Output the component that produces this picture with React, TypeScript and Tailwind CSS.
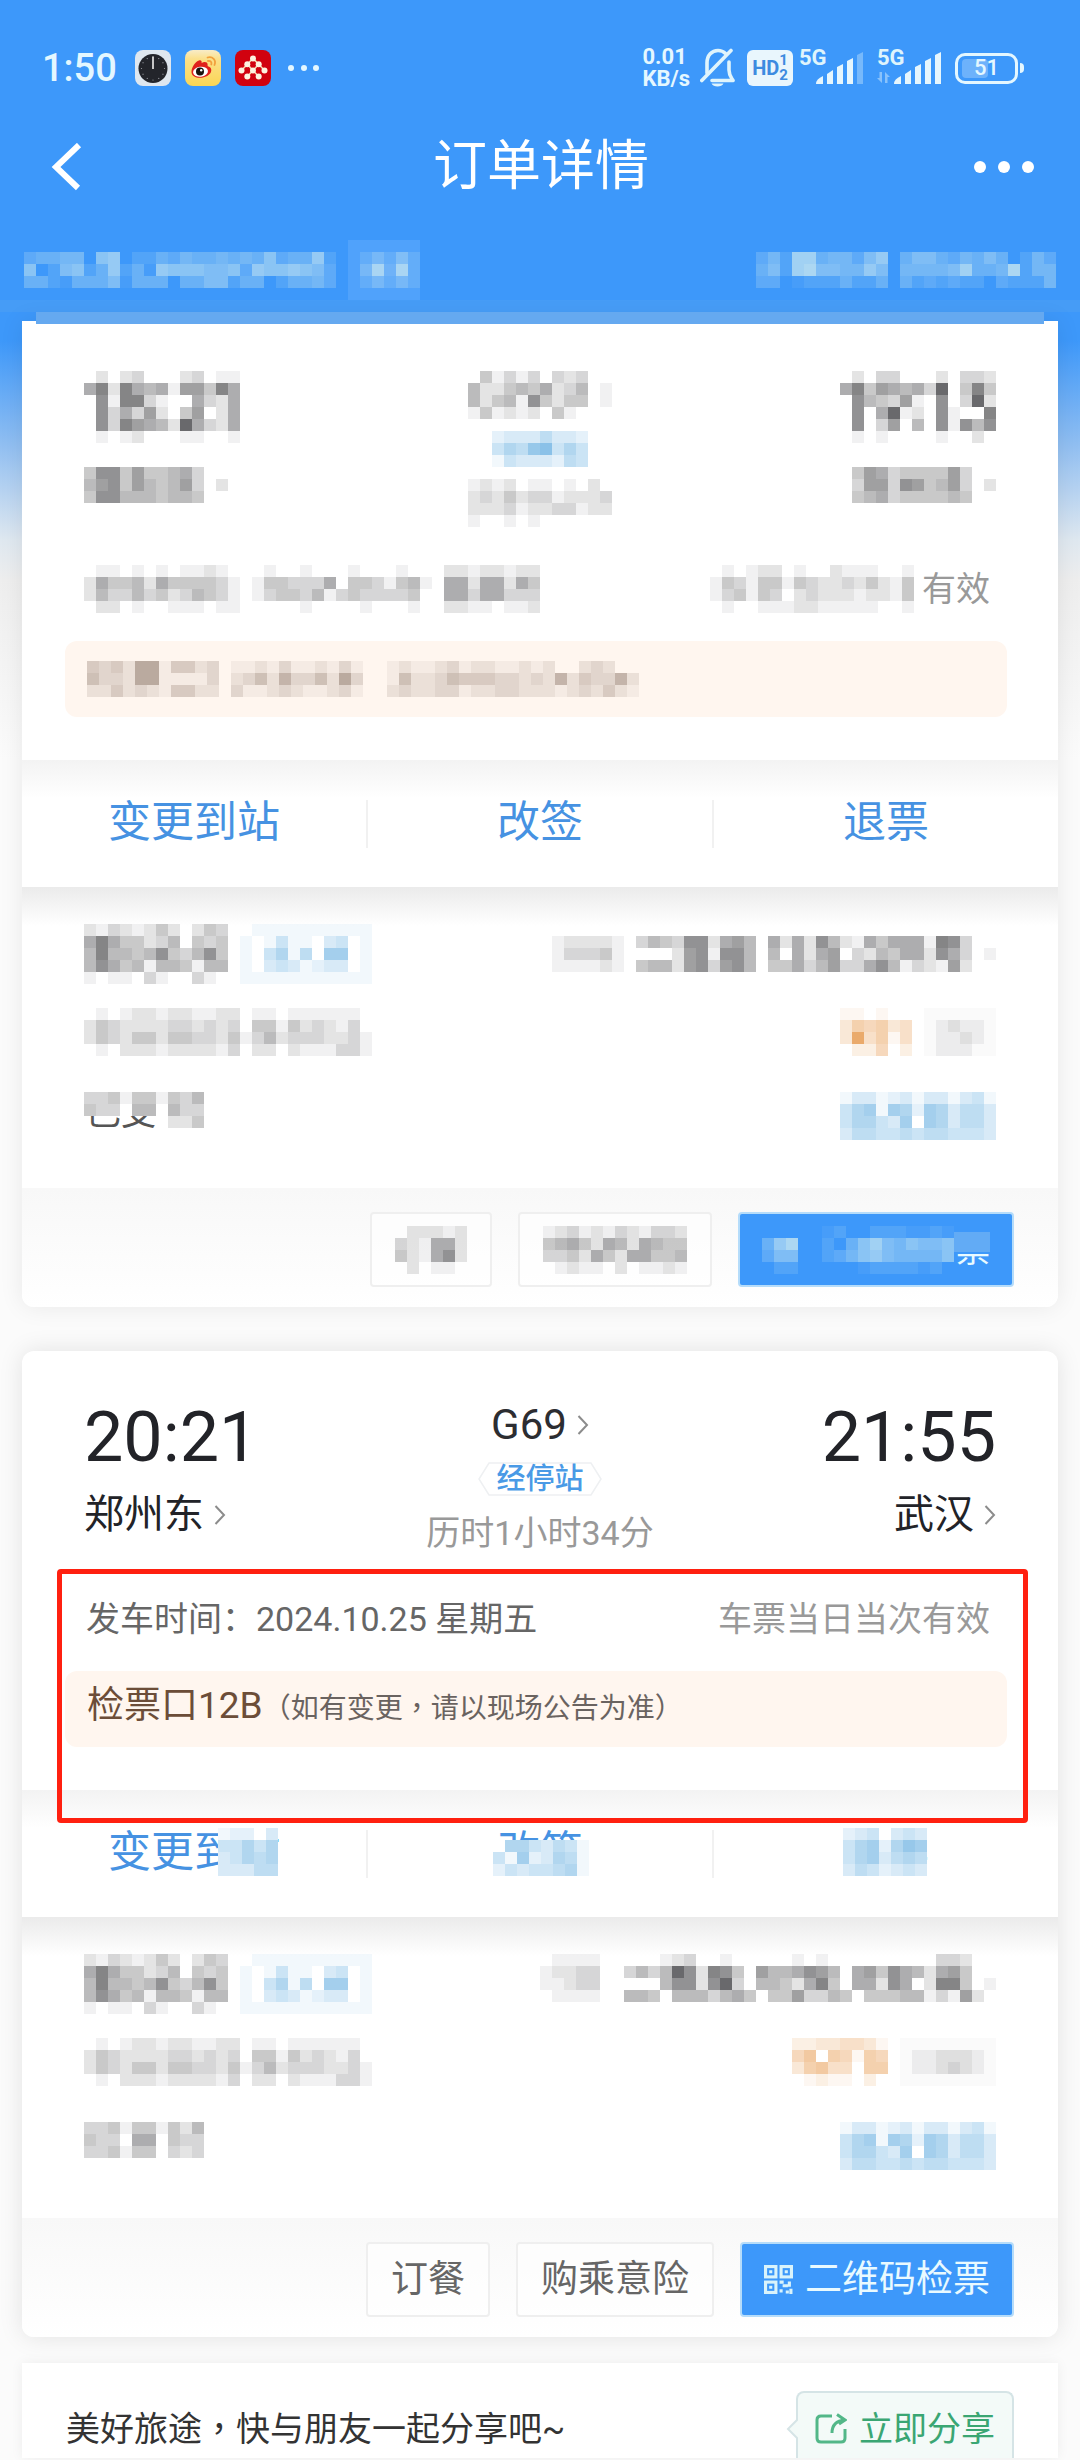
import type { ReactNode } from "react";
import clsx from "clsx";

const CELL = 12;

const TONES = {
	gray: "#333336",
	blue: "#3c98d8",
	orange: "#e38b35",
	brown: "#6b5344",
	white: "#e4f6ee",
};

// Every character is one cell, its hex value the strength of the tone.
function Mosaic({
	rows,
	tone = "gray",
	className,
}: {
	rows: string[];
	tone?: keyof typeof TONES;
	className?: string;
}) {
	const cols = Math.max(...rows.map((row) => row.length));

	return (
		<svg
			aria-hidden="true"
			width={cols * CELL}
			height={rows.length * CELL}
			shapeRendering="crispEdges"
			fill={TONES[tone]}
			className={clsx("shrink-0", className)}
		>
			{rows.map((row, y) =>
				[...row].map((cell, x) => {
					const level = parseInt(cell, 16);
					return level > 0 ? (
						<rect
							key={`${x}-${y}`}
							x={x * CELL}
							y={y * CELL}
							width={CELL}
							height={CELL}
							opacity={level / 15}
						/>
					) : null;
				}),
			)}
		</svg>
	);
}

// The TC face centres the full-width comma in its square.
function Comma() {
	return <span className="font-['Noto_Sans_CJK_TC',sans-serif]" lang="zh-TW">{"\uFF0C"}</span>;
}

function Chevron() {
	return (
		<svg width="12" height="22" viewBox="0 0 12 22" fill="none" className="shrink-0">
			<path d="M1.5 2 L10 11 L1.5 20" stroke="#8c8c8c" strokeWidth="2" />
		</svg>
	);
}

function ClockApp() {
	return (
		<svg width="36" height="36" viewBox="0 0 36 36">
			<rect width="36" height="36" rx="8" fill="#dfe7ef" />
			<circle cx="18" cy="18.500" r="14.500" fill="#23252b" />
			{[0, 30, 60, 90, 120, 150, 180, 210, 240, 270, 300, 330].map((deg) => (
				<circle
					key={deg}
					cx="18"
					cy="7"
					r="0.6"
					fill="#9a9da3"
					transform={`rotate(${deg} 18 18.5)`}
				/>
			))}
			<path d="M18 6.500 V19" stroke="#d8d8d8" strokeWidth="1.800" />
		</svg>
	);
}

function WeiboApp() {
	return (
		<svg width="36" height="36" viewBox="0 0 36 36">
			<defs>
				<linearGradient id="weibo" x1="0" y1="0" x2="0" y2="1">
					<stop offset="0" stopColor="#f8ecc8" />
					<stop offset="0.25" stopColor="#fbe08a" />
					<stop offset="1" stopColor="#fbd654" />
				</linearGradient>
			</defs>
			<rect width="36" height="36" rx="8" fill="url(#weibo)" />
			<path
				d="M6.500 22 C6.500 17 10.500 11.500 14 10.500 C16 10 17 11 16.600 13 C19 11.500 22.500 11.500 22.600 14.500 C22.700 15.500 22.300 16 23.500 16.600 C26.500 17.700 27 20.500 25.500 23 C21 29.500 6.500 29.500 6.500 22 Z"
				fill="#e0211c"
			/>
			<ellipse cx="15.500" cy="21.800" rx="7.500" ry="5" fill="#fff" transform="rotate(-8 15.500 21.800)" />
			<circle cx="15" cy="21.500" r="4" fill="#17120f" />
			<circle cx="16.200" cy="20.300" r="1.200" fill="#fff" />
			<path
				d="M22.500 7.500 C27.500 6 31.500 10 29.500 15 M23 11 C25.500 10.500 27 12 26.300 14.500"
				fill="none"
				stroke="#f2a03c"
				strokeWidth="1.800"
				strokeLinecap="round"
			/>
		</svg>
	);
}

function RedApp() {
	const dots = [
		[18, 8.5], [12.3, 14.2], [23.7, 14.2], [6.5, 20.5],
		[18, 20.5], [29.5, 20.5], [12.3, 26.5], [23.7, 26.5],
	];
	return (
		<svg width="36" height="36" viewBox="0 0 36 36">
			<rect width="36" height="36" rx="8" fill="#d1020f" />
			<path
				d="M12.300 14.200 L18 8.500 L23.700 14.200 M6.500 20.500 L12.300 14.200 L18 20.500 L23.700 14.200 L29.500 20.500 M12.300 26.500 L18 20.500 L23.700 26.500"
				fill="none"
				stroke="#f3d7ad"
				strokeWidth="1.600"
			/>
			{dots.map(([cx, cy]) => (
				<circle key={`${cx}-${cy}`} cx={cx} cy={cy} r="3" fill="#fdf3e0" />
			))}
		</svg>
	);
}

function MutedBell() {
	return (
		<svg width="35" height="40" viewBox="0 0 35 40" fill="none" stroke="#dff4fc" strokeWidth="3.600">
			<path d="M7 25 V15 C7 7 12 2.500 18 2.500 C21 2.500 23.500 3.500 25.500 5.500" strokeLinecap="round" />
			<path d="M29 14 V22 C29 27 31 29 33 32.500 H12" strokeLinejoin="round" strokeLinecap="round" />
			<path d="M31 2.500 L1.800 32.500" strokeLinecap="round" />
			<path d="M11.500 35.500 C13 39.500 22 39.500 23.500 35.500 Z" fill="#dff4fc" stroke="none" />
		</svg>
	);
}

function Signal({ weak = false, data = false }: { weak?: boolean; data?: boolean }) {
	return (
		<div className="relative h-9 w-16">
			<span className="absolute left-0 top-0 text-[22px] leading-4 font-bold text-[#dff4fc]">
				5G
			</span>
			<svg width="66" height="36" viewBox="0 0 66 36" fill="#e6f6fd" className="absolute left-0 top-0">
				{data && (
					<path
						d="M5 22 V33 L0 28 H2.500 V22 Z M8 33 V22 L13 27 H10.500 V33 Z"
						opacity="0.45"
					/>
				)}
				<path d="M17 34 Q17 29 24 26 V34 Z" />
				<path d="M28 34 V24 L34 20 V34 Z" />
				<path d="M38 34 V17 L44 14 V34 Z" />
				<path d="M48 34 V11 L54 8 V34 Z" />
				<path d="M58 34 V5 L64 2 V34 Z" opacity={weak ? 0.35 : 1} />
			</svg>
		</div>
	);
}

function StatusBar() {
	return (
		<div className="flex h-[136px] items-center justify-between pl-[42px] pr-14 text-[#e4f7ff]">
			<div className="flex items-center gap-3.5">
				<span className="mr-1 text-[38px] leading-10 font-medium">1:50</span>
				<ClockApp />
				<WeiboApp />
				<RedApp />
				<svg width="36" height="8" viewBox="0 0 36 8" fill="#e4f7ff">
					<circle cx="6" cy="4" r="3" />
					<circle cx="19" cy="4" r="3" />
					<circle cx="31" cy="4" r="3" />
				</svg>
			</div>
			<div className="flex items-center">
				<div className="mr-2.5 text-[22px] font-bold">
					<div className="leading-[22px]">0.01</div>
					<div className="leading-[22px]">KB/s</div>
				</div>
				<MutedBell />
				<div className="ml-3 flex h-9 w-[46px] items-center justify-center rounded-md bg-[#e9f6fd] font-bold text-[#3d8be0]">
					<span className="text-[20px] leading-5">HD</span>
					<span className="text-[15px] leading-[15px]">
						<span className="block">1</span>
						<span className="block">2</span>
					</span>
				</div>
				<div className="ml-1.5 flex gap-3.5">
					<Signal weak />
					<Signal data />
				</div>
				<div className="ml-3.5 flex items-center gap-0.5">
					<div className="relative flex h-[31px] w-[63px] items-center justify-center rounded-[10px] border-3 border-[#e4f7ff]">
						<span className="absolute left-1 top-[3px] h-[19px] w-[26px] rounded-sm bg-white/25" />
						<span className="relative text-[22px] leading-6 font-medium">51</span>
					</div>
					<span className="h-2.5 w-1 rounded-r-full bg-[#e4f7ff]" />
				</div>
			</div>
		</div>
	);
}

function NavBar() {
	return (
		<header className="flex h-[62px] items-center justify-between pl-12 pr-[46px] text-white">
			<button type="button" aria-label="返回" className="w-[60px]">
				<svg width="36" height="48" viewBox="0 0 36 48" fill="none">
					<path d="M31 2 L8 24 L30 45" stroke="#fff" strokeWidth="6" />
				</svg>
			</button>
			<h1 className="text-[54px] leading-[62px]">订单详情</h1>
			<button type="button" aria-label="更多">
				<svg width="60" height="14" viewBox="0 0 60 14" fill="#fff">
					<circle cx="6" cy="7" r="6" />
					<circle cx="30" cy="7" r="6" />
					<circle cx="54" cy="7" r="6" />
				</svg>
			</button>
		</header>
	);
}

function OrderInfo() {
	return (
		<div className="mt-[42px] flex h-[60px] items-center justify-between px-6">
			<div className="flex items-center">
				<Mosaic
					tone="white"
					rows={[
						"344550780224354454547344820",
						"702672482418777667387787630",
						"442144461444044662440244530",
					]}
				/>
				<Mosaic
					tone="white"
					className="bg-white/10"
					rows={["000000", "024252", "049392", "024242", "000000"]}
				/>
			</div>
			<Mosaic
				tone="white"
				rows={[
					"03529945536804664354640253",
					"04629a6655860555569445a255",
					"03301222422404232322032225",
				]}
			/>
		</div>
	);
}

function TripSection({
	depart,
	train,
	arrive,
	date,
	validity,
	gate,
}: {
	depart: ReactNode;
	train: ReactNode;
	arrive: ReactNode;
	date: ReactNode;
	validity: ReactNode;
	gate: ReactNode;
}) {
	return (
		<section className="pb-[43px]">
			<div className="grid grid-cols-3 px-[62px] pt-[50px]">
				<div className="flex flex-col items-start gap-[18px]">{depart}</div>
				<div className="flex flex-col items-center gap-3">{train}</div>
				<div className="flex flex-col items-end gap-[18px]">{arrive}</div>
			</div>
			<div className="mt-[38px] flex h-12 items-center justify-between pl-16 pr-[68px] text-[34px] leading-[48px] whitespace-nowrap">
				<div className="text-[#666]">{date}</div>
				<div className="flex items-center text-[#999]">{validity}</div>
			</div>
			<div className="mr-[51px] ml-[43px] mt-7 flex h-[76px] items-center rounded-xl bg-[#fff6ef] px-[22px]">
				{gate}
			</div>
		</section>
	);
}

function ActionRow({ children }: { children: ReactNode }) {
	return (
		<section className="flex h-[127px] items-center divide-x-2 divide-[#f1f1f1] bg-linear-to-b from-[#f3f3f3] via-white via-30% to-white">
			{children}
		</section>
	);
}

function Action({ label, cover }: { label: string; cover?: ReactNode }) {
	return (
		<button
			type="button"
			className="flex h-12 flex-1 items-center justify-center text-[43px] leading-[48px] text-[#4692e2]"
		>
			<span className="relative -top-0.5">
				{label}
				{cover}
			</span>
		</button>
	);
}

const NAME = ["213212420243", "696442350434", "595545843584", "586451554155", "101103100310"];
const KIND = ["01111111111", "10141103401", "10461507701", "10343123301", "11111111111"];
const ID_CARD = [
	"010122122112201101111110",
	"243222233232304414232130",
	"243244244332413523332231",
	"010222122221302202111331",
];
const REFUND = ["1331231331341", "4671762763553", "4664370763553", "3554454554443"];

function PassengerSection({
	seatTag,
	seat,
	price,
	discount,
	paid,
}: {
	seatTag: string[];
	seat: string[];
	price: string[];
	discount: string[];
	paid: ReactNode;
}) {
	return (
		<section className="bg-linear-to-b from-[#ebebeb] via-white via-13% to-white px-[62px] pt-[37px] pb-12">
			<div className="flex h-[60px] items-end justify-between">
				<div className="flex gap-3">
					<Mosaic rows={NAME} />
					<Mosaic tone="blue" rows={KIND} />
				</div>
				<div className="flex gap-3">
					<Mosaic rows={seatTag} />
					<Mosaic rows={seat} />
				</div>
			</div>
			<div className="mt-6 flex h-12 items-center justify-between">
				<Mosaic rows={ID_CARD} />
				<div className="flex gap-3">
					<Mosaic tone="orange" rows={price} />
					<Mosaic rows={discount} className="bg-neutral-50" />
				</div>
			</div>
			<div className="mt-9 flex h-12 items-start justify-between">
				{paid}
				<Mosaic tone="blue" rows={REFUND} />
			</div>
		</section>
	);
}

function CardFooter({ children }: { children: ReactNode }) {
	return (
		<footer className="flex h-[119px] items-start justify-end gap-[26px] rounded-b-xl bg-linear-to-b from-[#f8f8f8] to-white pt-6 pr-11 text-[37px] leading-[48px] text-[#666]">
			{children}
		</footer>
	);
}

function OutlineButton({ children }: { children: ReactNode }) {
	return (
		<button
			type="button"
			className="flex h-[75px] items-center rounded-sm border-2 border-[#efefef] bg-white/60 px-[23px]"
		>
			{children}
		</button>
	);
}

function SolidButton({ children }: { children: ReactNode }) {
	return (
		<button
			type="button"
			className="flex h-[75px] items-center gap-3 rounded-sm border-2 border-[#b5dcfa] bg-[#3d98fa] px-[22px] text-[#e9faff]"
		>
			{children}
		</button>
	);
}

function QrIcon() {
	return (
		<svg width="29" height="29" viewBox="0 0 28 28" fill="none" stroke="#d9f3fb" strokeWidth="3">
			<rect x="1.500" y="1.500" width="10" height="10" />
			<rect x="16.500" y="1.500" width="10" height="10" />
			<rect x="1.500" y="16.500" width="10" height="10" />
			<path d="M5 6.500 H8 M20 6.500 H23 M5 21.500 H8" />
			<path d="M15 16.500 H19 M18 20 H23 M15 25 H18 M24.500 16 V21 M21 26 H24 M26 23 V28" />
		</svg>
	);
}

function StopBadge() {
	return (
		<div className="relative flex h-9 w-[126px] items-center justify-center">
			<svg width="126" height="34" viewBox="0 0 126 34" fill="#fff" className="absolute">
				<path
					d="M12 1 H114 L124 17 L114 33 H12 L2 17 Z"
					stroke="#eef0f2"
					strokeWidth="1.500"
				/>
			</svg>
			<span className="relative text-[29px] leading-8 font-medium text-[#4a9ae6]">
				经停站
			</span>
		</div>
	);
}

function Station({ name }: { name: string }) {
	return (
		<a href="#station" className="flex items-center gap-2.5 text-[40px] leading-[48px] text-[#222328]">
			{name}
			<Chevron />
		</a>
	);
}

function FirstOrder() {
	return (
		<article className="mx-[22px] -mt-[3px] rounded-b-xl bg-white shadow-[0_0_24px_rgba(0,0,0,0.08)]">
			<TripSection
				depart={
					<>
						<Mosaic
							rows={[
								"0202300023011",
								"6929656177496",
								"0819931006326",
								"0836372047026",
								"08397652b6326",
								"0101200011001",
							]}
						/>
						<Mosaic
							className="my-1.5"
							rows={["488474456300", "578475457302", "488555455400"]}
						/>
					</>
				}
				train={
					<>
						<Mosaic rows={["041313032300", "522454623501", "524518424401", "141212041000"]} />
						<Mosaic tone="blue" rows={["23335332", "46589464", "14333254"]} />
						<Mosaic rows={["121201101020", "232423312223", "222312233122", "100101000000"]} />
					</>
				}
				arrive={
					<>
						<Mosaic
							rows={[
								"0203300020332",
								"69476563b0494",
								"08543710803b2",
								"0806b12081009",
								"0803705081858",
								"0101000010020",
							]}
						/>
						<Mosaic
							className="my-1.5"
							rows={["476344447300", "377387457302", "456344445400"]}
						/>
					</>
				}
				date={
					<Mosaic
						className="-ml-0.5"
						rows={[
							"01101010112100010010001000100022122122",
							"26445264444310144333604431451066266264",
							"25335342354310134435134333340066366333",
							"02201001110110000010000100010022110112",
						]}
					/>
				}
				validity={
					<>
						<Mosaic
							rows={[
								"01012201002111001",
								"14314414322324214",
								"13414302322212214",
								"01001112211111001",
							]}
						/>
						<span className="ml-2">有效</span>
					</>
				}
				gate={
					<Mosaic
						tone="brown"
						rows={[
							"4342771442301121311213100121123122112120023200",
							"5332771111302352633527300152235444332326243362",
							"2242321442203112321123100232233122332221232421",
						]}
					/>
				}
			/>
			<ActionRow>
				<Action label="变更到站" />
				<Action label="改签" />
				<Action label="退票" />
			</ActionRow>
			<PassengerSection
				seatTag={["122221", "133341", "111121", "000000"]}
				seat={[
					"354388267506262852164666198300",
					"000278188505062670325466286301",
					"455278378504463573368513217200",
					"000000000000000000000000000000",
				]}
				price={["110100", "365634", "3b4614", "022502"]}
				discount={["000000", "012110", "011210", "011100"]}
				paid={
					<div className="relative pt-1 text-[35px] leading-9 text-[#555]">
						<span className="ml-0.5">已支付</span>
						<Mosaic
							className="absolute left-0 top-0 bg-white"
							rows={["3341441435", "4330550533"]}
						/>
						<Mosaic className="absolute left-[72px] top-6 bg-white" rows={["02240"]} />
					</div>
				}
			/>
			<CardFooter>
				<OutlineButton>
					<Mosaic rows={["022212", "321662", "421682", "020110"]} />
				</OutlineButton>
				<OutlineButton>
					<Mosaic rows={["123121321332", "456426526544", "334264266445", "012110201121"]} />
				</OutlineButton>
				<SolidButton>
					<div className="flex items-center">
						<Mosaic
							tone="white"
							rows={["0000012002221121", "48a0020479657667", "3660023578655557", "0220000012222120"]}
						/>
						<span className="relative pl-0.5 text-[34px] leading-9">
							票
							<span className="absolute inset-x-0 top-0 h-5 bg-[#62abf5]" />
						</span>
					</div>
				</SolidButton>
			</CardFooter>
		</article>
	);
}

function SecondOrder() {
	return (
		<article className="relative mx-[22px] mt-11 rounded-xl bg-white shadow-[0_0_24px_rgba(0,0,0,0.1)]">
			<TripSection
				depart={
					<>
						<time className="text-[70px] leading-[72px] text-[#222328]">20:21</time>
						<Station name="郑州东" />
					</>
				}
				train={
					<>
						<a href="#train" className="flex items-center gap-2.5 text-[42px] leading-[48px] text-[#2c2d31]">
							G69
							<Chevron />
						</a>
						<StopBadge />
						<p className="text-[34px] leading-[48px] whitespace-nowrap text-[#999]">
							历时1小时34分
						</p>
					</>
				}
				arrive={
					<>
						<time className="text-[70px] leading-[72px] text-[#222328]">21:55</time>
						<Station name="武汉" />
					</>
				}
				date={"发车时间\uFF1A2024.10.25 星期五"}
				validity="车票当日当次有效"
				gate={
					<p className="leading-[48px] whitespace-nowrap">
						<span className="text-[37px] text-[#6c4d38]">检票口12B</span>
						<span className="text-[28px] text-[#6a6360]">
							{"\uFF08如有变更"}
							<Comma />
							{"请以现场公告为准\uFF09"}
						</span>
					</p>
				}
			/>
			<ActionRow>
				<Action
					label="变更到站"
					cover={
						<Mosaic
							tone="blue"
							className="absolute left-[110px] top-0 bg-white"
							rows={["12203", "44646", "34656", "33355"]}
						/>
					}
				/>
				<Action
					label="改签"
					cover={
						<Mosaic
							tone="blue"
							className="absolute -left-1 top-3 bg-white"
							rows={["06643541", "41723651", "24344561"]}
						/>
					}
				/>
				<Action
					label="退票"
					cover={
						<Mosaic
							tone="blue"
							className="absolute left-0 top-0 bg-white"
							rows={["2340343", "4672687", "4673565", "3542343"]}
						/>
					}
				/>
			</ActionRow>
			<PassengerSection
				seatTag={["011110", "122330", "112330", "011110"]}
				seat={[
					"0001230010000010100000000033200",
					"3535b82984075568750674865267400",
					"00058828b3055426940662860299401",
					"5540555356404473354044455131720",
					"0000000000000000000000000000000",
				]}
				price={["22334431", "57065165", "36744066", "01211020"]}
				discount={["00000000", "01122210", "01123210", "00000000"]}
				paid={<Mosaic rows={["3341441425", "4330660433", "3341440323"]} />}
			/>
			<CardFooter>
				<OutlineButton>订餐</OutlineButton>
				<OutlineButton>购乘意险</OutlineButton>
				<SolidButton>
					<QrIcon />
					二维码检票
				</SolidButton>
			</CardFooter>
			<div className="pointer-events-none absolute top-[218px] right-[30px] left-[35px] h-[254px] rounded-sm border-5 border-[#ff2010]" />
		</article>
	);
}

function ShareBar() {
	return (
		<section className="mx-[22px] mt-[26px] flex items-start justify-between bg-white pt-7 pr-11 pl-11 shadow-[0_0_12px_rgba(0,0,0,0.06)]">
			<p className="mt-3 text-[34px] leading-[48px] whitespace-nowrap text-[#333]">
				美好旅途
				<Comma />
				快与朋友一起分享吧~
			</p>
			<button
				type="button"
				className="relative flex h-[67px] items-start gap-3 rounded-t-lg border-2 border-b-0 border-[#d5e4e6] bg-[#f3faf8] px-[17px] pt-3 text-[34px] leading-[48px] text-[#3aa673]"
			>
				<svg
					width="12"
					height="24"
					viewBox="0 0 12 24"
					fill="#f3faf8"
					stroke="#d5e4e6"
					strokeWidth="2"
					className="absolute -left-3 top-6"
				>
					<path d="M12 2 L2 12 L12 22" />
				</svg>
				<svg width="32" height="32" viewBox="0 0 32 32" fill="none" stroke="#52b788" strokeWidth="3" className="mt-2">
					<path d="M17 3 H6 Q2 3 2 7 V25 Q2 29 6 29 H26 Q30 29 30 25 V16" />
					<path d="M17 20 Q17 8 30 7 M22 1.500 L30 7 L24 11" />
				</svg>
				立即分享
			</button>
		</section>
	);
}

export default function App() {
	return (
		<div className="min-h-screen overflow-hidden bg-[#fbfbfb] bg-[linear-gradient(#3d98fa_340px,#8dbdf2_440px,#dfe8f0_540px,#eeeeee_580px,#fbfbfb_760px)] font-[Roboto,'Noto_Sans_CJK_SC',sans-serif]">
			<StatusBar />
			<NavBar />
			<OrderInfo />
			<div className="h-3 bg-[#469cf6]" />
			<div className="relative z-10 mx-9 h-3 bg-[#65a9f0]" />
			<main>
				<FirstOrder />
				<SecondOrder />
				<ShareBar />
			</main>
		</div>
	);
}
